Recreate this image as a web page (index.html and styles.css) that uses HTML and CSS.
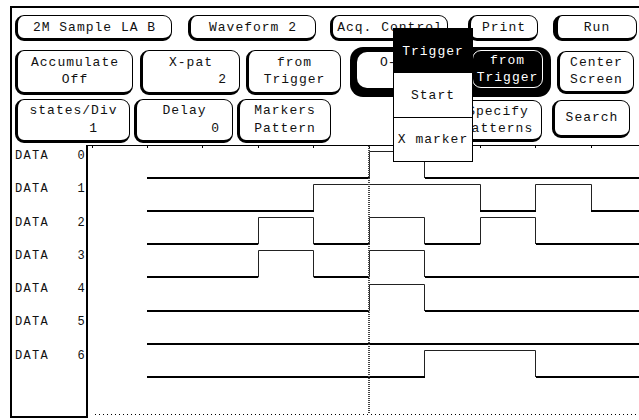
FILE: index.html
```html
<!DOCTYPE html>
<html lang="en">
<head>
  <meta charset="UTF-8" />
  <title>Waveform 2</title>
  <link rel="stylesheet" href="styles.css">
</head>
<body>
  <div class="screen">
    <div class="frame">
      <div class="row row-1">
        <div class="btn b-sample">2M Sample LA B</div>
        <div class="btn b-wave">Waveform 2</div>
        <div class="btn b-acq">Acq. Control</div>
        <div class="btn b-print">Print</div>
        <div class="btn b-run">Run</div>
      </div>
      <div class="row row-2">
        <div class="btn b-accum"><span>Accumulate</span><span>Off</span></div>
        <div class="btn b-xpat"><span>X-pat</span><span class="val">2</span></div>
        <div class="btn b-from"><span>from</span><span>Trigger</span></div>
        <div class="group">
          <div class="group-field">O-</div>
          <div class="group-inv"><span>from</span><span>Trigger</span></div>
        </div>
        <div class="btn b-center"><span>Center</span><span>Screen</span></div>
      </div>
      <div class="row row-3">
        <div class="btn b-states"><span>states/Div</span><span class="val val-wide">1</span></div>
        <div class="btn b-delay"><span>Delay</span><span class="val">0</span></div>
        <div class="btn b-markers"><span>Markers</span><span>Pattern</span></div>
        <div class="btn b-specify"><span>Specify</span><span>Patterns</span></div>
        <div class="btn b-search">Search</div>
      </div>
      <div class="display">
        <div class="labels">
          <div class="label"><span>DATA</span><span>0</span></div>
          <div class="label"><span>DATA</span><span>1</span></div>
          <div class="label"><span>DATA</span><span>2</span></div>
          <div class="label"><span>DATA</span><span>3</span></div>
          <div class="label"><span>DATA</span><span>4</span></div>
          <div class="label"><span>DATA</span><span>5</span></div>
          <div class="label"><span>DATA</span><span>6</span></div>
        </div>
        <svg class="plot" width="551" height="273" viewBox="0 0 551 273">
          <!-- grid top + ticks -->
          <path d="M0 0.5H551" stroke="#000" stroke-width="1" fill="none"/>
          <path d="M4.5 0V3M59.5 0V3M114.5 0V3M170.5 0V3M225.5 0V3M281.5 0V3M336.5 0V3M392.5 0V3M447.5 0V3M503.5 0V3" stroke="#000" stroke-width="1"/>
          <!-- waveforms: thin outline -->
          <g stroke="#222" stroke-width="1" fill="none">
            <path d="M59 33H281.5V6.5H336.5V33"/>
            <path d="M59 66H225.5V39.5H392.5V66H447.5V39.5H503.5V66"/>
            <path d="M59 99H170.5V72.5H225.5V99H281.5V72.5H336.5V99H392.5V72.5H447.5V99"/>
            <path d="M59 132H170.5V105.5H225.5V132H281.5V105.5H336.5V132"/>
            <path d="M59 166H281.5V139.5H336.5V166"/>
            <path d="M59 232H336.5V205.5H447.5V232"/>
          </g>
          <!-- low levels drawn heavy -->
          <g stroke="#000" stroke-width="2" fill="none">
            <path d="M59 33H281M337 33H551"/>
            <path d="M59 66H226M392 66H448M503 66H551"/>
            <path d="M59 99H170M226 99H281M337 99H392M448 99H551"/>
            <path d="M59 132H170M226 132H281M337 132H551"/>
            <path d="M59 166H281M337 166H551"/>
            <path d="M59 199H551"/>
            <path d="M59 232H337M448 232H551"/>
          </g>
          <!-- trigger marker -->
          <path d="M281 1V268" stroke="#444" stroke-width="2" stroke-dasharray="1 1" fill="none"/>
          <path d="M7 269.5H551" stroke="#000" stroke-width="1" stroke-dasharray="1 3" fill="none"/>
        </svg>
      </div>
    </div>

    <div class="menu">
      <div class="menu-title">Trigger</div>
      <div class="menu-item">Start</div>
      <div class="menu-item menu-sep">X marker</div>
    </div>
  </div>
</body>
</html>
```

FILE: styles.css
```css
body {
  margin: 0;
  background: #fff;
  color: #111;
  font-family: "Liberation Mono", "DejaVu Sans Mono", monospace;
  font-size: 13px;
  letter-spacing: 1px;
}
.screen {
  position: relative;
  width: 639px;
  height: 420px;
  overflow: hidden;
}
.frame {
  box-sizing: border-box;
  margin: 6px 0 0 10px;
  height: 412px;
  border-top: 2px solid #000;
  border-left: 2px solid #000;
}
.row {
  display: flex;
}
.row-1 {
  margin-top: 7px;
  height: 26px;
}
.row-2 {
  margin-top: 6px;
  height: 50px;
  align-items: center;
}
.row-3 {
  margin-top: 2px;
  height: 44px;
  align-items: flex-start;
}

.btn {
  box-sizing: border-box;
  display: flex;
  flex-direction: column;
  justify-content: center;
  text-align: center;
  border: 1px solid #000;
  border-left-width: 3px;
  border-bottom-width: 3px;
  border-radius: 9px;
  line-height: 17px;
  white-space: pre;
}
.row-1 .btn { height: 26px; }
.row-2 .btn { height: 45px; }
.row-3 .btn { height: 44px; line-height: 18px; }
.val {
  text-align: right;
  padding-right: 12px;
}
.val-wide { padding-right: 31px; }

.b-sample { width: 157px; margin-left: 3px; }
.b-wave { width: 128px; margin-left: 16px; }
.b-acq { width: 118px; margin-left: 14px; }
.b-print { width: 70px; margin-left: 20px; }
.b-run { width: 84px; margin-left: 15px; border-left-width: 5px; }

.b-accum { width: 118px; margin-left: 3px; }
.b-xpat { width: 100px; margin-left: 7px; }
.b-from { width: 95px; margin-left: 6px; }
.row-2 .b-center { width: 77px; margin-left: 6px; height: 43px; }

.b-states { width: 115px; margin-left: 3px; }
.b-delay { width: 99px; margin-left: 4px; }
.b-markers { width: 94px; margin-left: 4px; line-height: 16px; }
.row-3 .b-specify { width: 90px; margin-left: 121px; margin-top: 1px; height: 42px; line-height: 17px; }
.row-3 .b-search { width: 78px; margin-left: 10px; margin-top: 1px; height: 38px; }

.group {
  box-sizing: border-box;
  display: flex;
  align-items: flex-end;
  gap: 6px;
  width: 201px;
  height: 50px;
  margin-left: 9px;
  padding: 0 8px 9px 7px;
  background: #000;
  border-radius: 13px;
}
.group-field {
  box-sizing: border-box;
  width: 109px;
  height: 36px;
  padding: 2px 0 0 23px;
  line-height: 17px;
  letter-spacing: 0;
  background: #fff;
  border-radius: 10px;
}
.group-inv {
  box-sizing: border-box;
  display: flex;
  flex-direction: column;
  justify-content: center;
  text-align: center;
  width: 71px;
  height: 38px;
  color: #fff;
  line-height: 17px;
  border: 1px solid #fff;
  border-radius: 9px;
}

.display {
  display: flex;
  margin-top: 2px;
  height: 273px;
}
.labels {
  box-sizing: border-box;
  width: 76px;
  height: 273px;
  border-right: 2px solid #000;
  border-bottom: 2px solid #000;
}
.label {
  box-sizing: border-box;
  display: flex;
  justify-content: space-between;
  height: 33.25px;
  padding: 4px 0 0 3px;
  font-size: 12px;
  line-height: 14px;
  letter-spacing: 1.3px;
}
.plot {
  display: block;
}

.menu {
  position: absolute;
  left: 393px;
  top: 28px;
  width: 80px;
  box-sizing: border-box;
  border: 1px solid #000;
  background: #fff;
}
.menu-title {
  height: 44px;
  display: flex;
  align-items: center;
  justify-content: center;
  background: #000;
  color: #fff;
}
.menu-item {
  box-sizing: border-box;
  height: 44px;
  display: flex;
  align-items: center;
  justify-content: center;
}
.menu-sep {
  border-top: 1px solid #000;
}
```
